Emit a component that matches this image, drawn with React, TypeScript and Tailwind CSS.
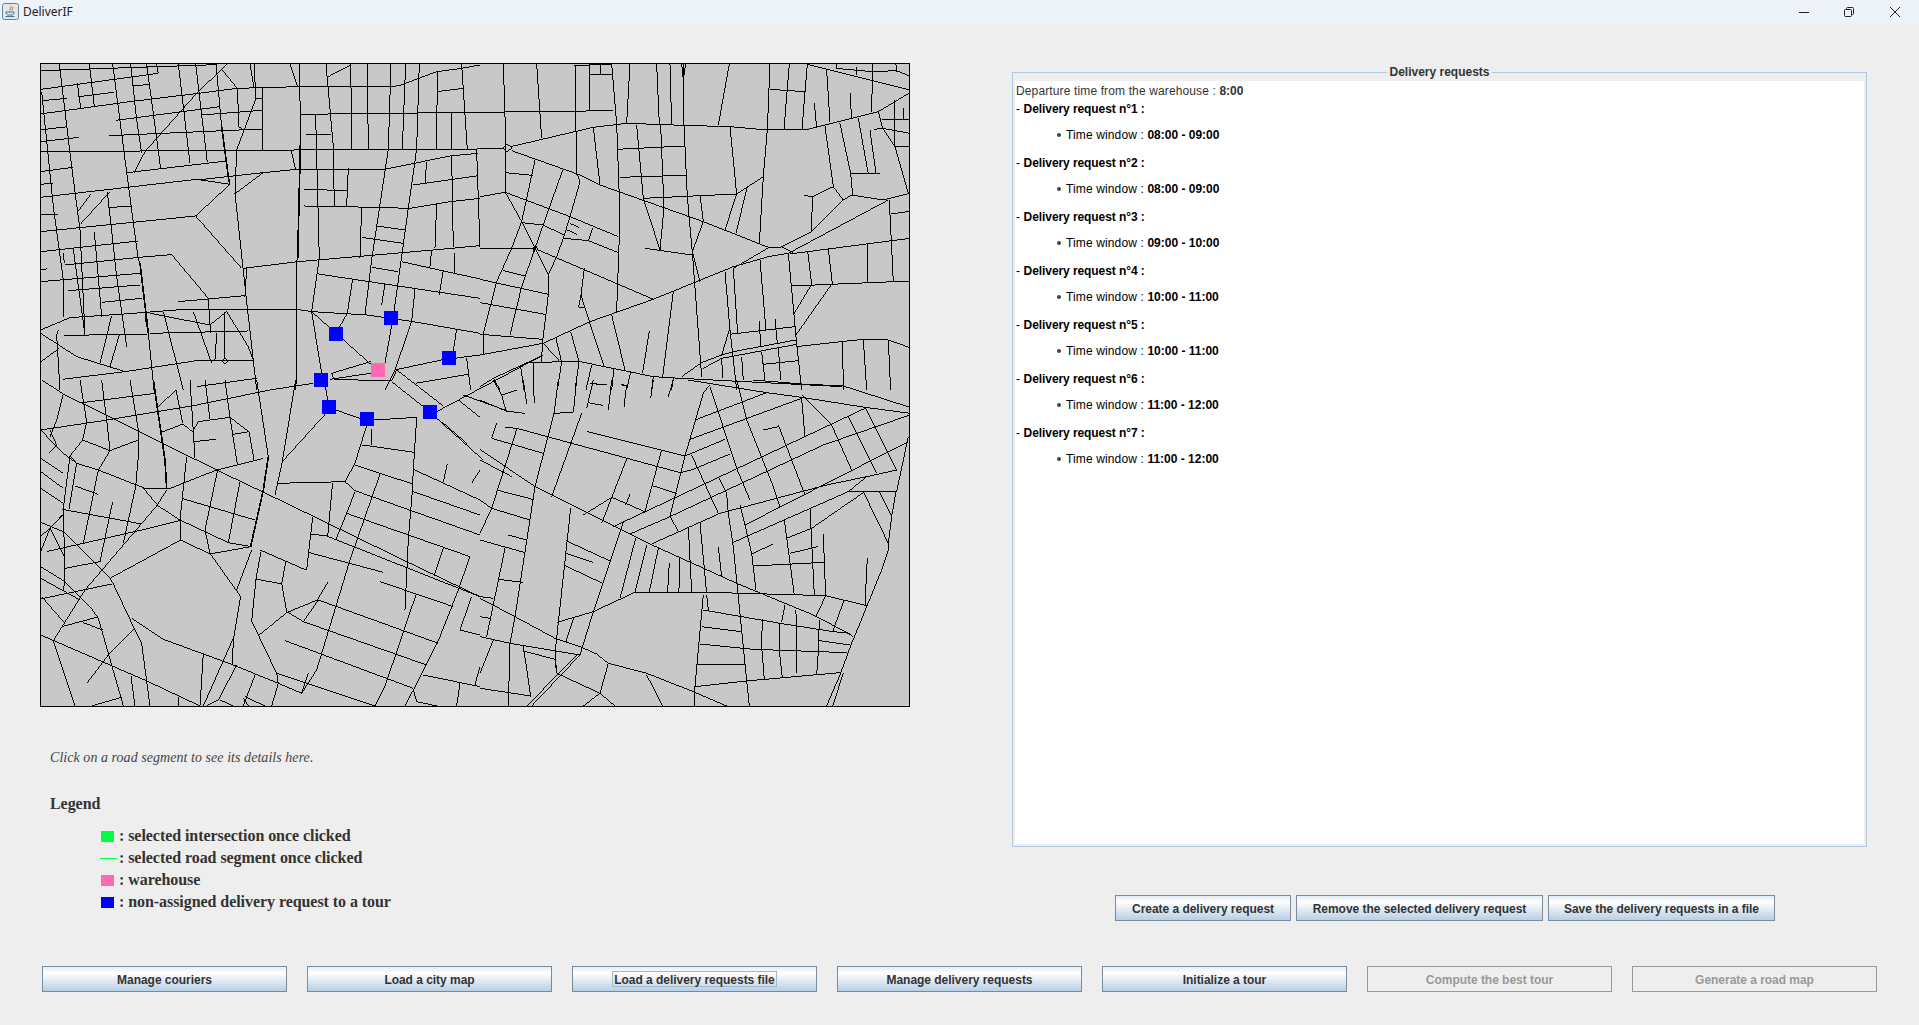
import React from 'react';

// road network traced per map quadrant, coordinates are 3x map pixels
const TILES: { dx: number; dy: number; roads: string[]; thick?: string[] }[] = [
  {
    dx: -10,
    dy: -13,
    thick: ['575,230 597,395', '812,250 803,630', '330,640 355,850'],
    roads: [
      '558,42 575,230', '597,395 600,403', '808,42 812,250', '355,850 372,1020', '325,630 330,640',
      '31,62 558,44', '33,118 385,70', '38,152 110,145', '145,140 252,127', '310,108 357,103',
      '31,192 300,155 505,130 622,115 805,110 1105,108 1220,65 1295,55 1350,45',
      '31,240 112,230', '31,275 147,262', '258,211 570,170', '237,257 697,237', '515,195 695,181',
      '31,305 800,300 1350,297', '31,365 128,352', '31,403 68,400',
      '31,442 500,388 600,403', '500,390 700,368 800,358 1065,358 1260,318 1345,310',
      '292,368 590,333', '312,368 345,305 500,130 575,58 592,40', '575,58 622,115',
      '622,115 627,230 640,240', '678,145 620,300 615,430 650,755 680,1020', '678,115 678,145 695,145',
      '698,115 698,300', '783,300 797,358', '614,432 700,368', '600,403 497,498 635,655',
      '31,545 497,498', '145,483 183,432', '152,522 240,425', '232,425 260,680 290,890',
      '235,473 305,468', '31,495 85,492', '32,605 325,573', '105,645 328,622 425,614', '33,660 50,657',
      '115,722 330,705', '32,695 330,670', '215,757 335,745',
      '32,840 120,803 270,793 440,780 800,778 845,785 1010,795 1150,815 1350,850',
      '360,790 540,825 590,785', '102,856 350,853', '360,850 655,843', '425,614 535,745 540,825 543,850',
      '445,755 645,737', '590,785 655,890 670,930', '585,785 585,925', '575,933 585,925 595,933 585,941 575,933',
      '32,850 140,920 285,965 500,932 672,932', '98,988 285,965', '33,935 88,895', '85,840 80,855 90,1020',
      '500,1010 680,985', '88,42 125,350 150,540 165,855', '35,125 70,470 100,690 100,800',
      '248,42 290,367 325,630', '345,800 355,850', '178,42 193,170', '142,100 152,175', '302,42 320,210 335,310',
      '350,42 392,355', '380,42 385,70', '445,42 480,340', '497,42 532,337', '660,42 672,115', '673,42 677,145',
      '780,42 803,110', '857,195 868,625 845,785', '888,42 910,290 913,470', '895,80 962,45', '962,42 966,297',
      '1012,42 1015,297', '1083,42 1075,297 1025,630 1005,795', '1127,42 1117,297',
      '1168,42 1160,297 1135,475 1090,800 1065,940', '1222,65 1220,297', '1295,42 1312,297', '1220,125 1300,115',
      '1265,187 1265,297', '810,193 1350,187', '828,253 903,253', '822,418 955,422',
      '822,468 940,470 1140,475 1260,455 1350,445', '955,355 950,470', '995,472 990,625', '1040,528 1125,540',
      '995,562 1120,580', '1150,405 1345,377', '1190,335 1185,400', '1265,315 1270,590', '1340,300 1350,590',
      '1220,460 1215,595', '640,655 805,635 1210,600 1350,587', '865,672 1350,745', '845,785 875,970',
      '845,785 918,850 1025,945', '968,688 952,790 918,850', '1065,700 1055,765', '1155,718 1145,815 1095,960 1065,1020',
      '1025,652 1105,665', '1115,635 1350,687', '1240,660 1228,735', '1205,600 1200,650', '1275,608 1275,672',
      '1280,838 1270,903', '1095,960 1235,930 1350,915', '1310,925 1322,1020', '1157,1000 1315,973',
      '905,970 1022,935', '905,970 912,988 1085,993 1100,960', '900,988 1022,970', '800,630 798,1020',
      '650,655 645,740', '245,797 210,940', '268,855 240,950', '193,545 215,800', '130,598 165,855',
      '400,785 460,1020', '490,785 545,940', '560,850 555,930', '100,610 103,640',
    ],
  },
  {
    dx: 440,
    dy: -13,
    roads: [
      '0,187 400,182', '70,42 78,295 75,430', '170,42 185,265', '285,45 290,375', '330,42 328,180', '285,47 395,42',
      '330,75 395,75', '362,42 362,75', '395,42 410,220 420,500 410,785', '450,42 440,220', '530,42 538,222',
      '570,42 575,225', '610,42 612,225 622,440 638,620 665,980', '605,42 610,90 617,42', '748,42 715,225',
      '870,42 862,240 850,380 838,580', '928,42 912,238', '982,42 966,238', '1040,60 1050,215', '985,44 1290,120',
      '1070,42 1068,55 1175,65 1250,62 1290,78', '1130,50 1130,75', '1178,42 1175,185', '1248,42 1250,65',
      '870,118 975,125', '1110,128 1115,205', '1003,158 1010,232',
      '92,290 340,232 440,220 610,226 750,230 862,240 985,238 1035,225 1195,185 1290,128',
      '340,232 360,405', '470,225 490,445 540,600', '542,225 552,475 540,600', '410,298 615,288', '420,382 618,376',
      '750,230 770,432 735,540', '802,410 768,550', '770,432 850,380', '490,445 770,432', '660,436 670,515',
      '70,295 0,295', '68,294 82,282 95,294 82,306 68,294', '95,302 300,375 360,405 670,515 865,592 900,592',
      '76,368 158,376', '165,330 125,515 95,595 50,695 10,850', '248,360 165,595 125,710 90,855',
      '0,440 76,427 125,515 205,675 205,735 187,880 185,935', '76,427 270,500 415,560', '415,608 325,572 252,565',
      '300,395 270,500 250,565 230,620 205,675', '292,372 300,395', '125,518 190,525 255,557', '0,595 158,595',
      '158,597 166,587 175,597 166,607 158,597', '175,600 520,748', '270,520 298,533', '262,540 290,553', '338,535 325,572',
      '495,595 635,615', '670,515 637,605 660,695', '70,662 135,678', '0,688 205,733', '0,758 195,793',
      '313,655 303,735 315,775 372,948', '303,735 296,772 313,772',
      '0,915 190,880 330,815 520,748 760,650 865,620 925,610', '0,1010 40,985 185,918', '0,853 187,868',
      '395,795 435,960', '580,725 548,980', '508,843 488,968', '735,665 750,840 770,1020', '760,655 773,850',
      '840,630 858,840', '925,610 950,880 965,1020', '930,612 1290,565', '983,602 995,703 940,795',
      '1045,597 1057,700 948,855', '935,708 1290,693', '1162,580 1162,695', '1228,450 1240,695', '1232,492 1290,484',
      '900,592 995,545 1090,450 1115,435 1210,450 1290,430', '925,610 1225,450', '905,590 940,608', '760,655 868,592',
      '1035,228 1060,410 1090,450', '1080,220 1112,370 1118,435', '1135,205 1165,372', '1170,240 1188,370',
      '1112,372 1200,370', '1183,238 1208,235 1290,250', '1195,185 1208,235 1245,290 1285,430', '1205,208 1290,210',
      '1270,175 1270,210', '1245,150 1245,290 1290,290', '972,436 997,440 1060,410', '997,440 995,545',
      '750,853 945,830', '725,915 760,905 948,870 950,890', '670,955 725,925 950,883', '605,980 665,938 725,915 748,840',
      '838,812 842,888', '885,807 892,880', '950,890 1085,875 1150,868 1225,870 1290,893', '1088,875 1090,1020',
      '1150,868 1160,1020', '1225,870 1232,1020', '120,950 150,937 300,935 520,980 600,985 1085,1010', '122,950 132,1020',
      '160,940 160,1020', '190,880 240,935', '228,865 245,937 232,1020', '272,845 297,935 285,1020', '335,945 318,1020',
      '402,955 395,1020', '452,965 440,1020', '520,980 515,1020', '580,983 575,1020', '785,920 790,990', '725,925 728,985',
      '850,943 955,932', '845,905 855,992', '895,890 902,990', '330,1000 380,1005', '425,1005 442,1008', '40,985 60,1020',
    ],
  },
  {
    dx: -10,
    dy: 317,
    thick: ['370,0 405,240 410,325', '715,230 700,330 662,500'],
    roads: [
      '157,68 375,40', '32,150 232,120 500,75 720,30 850,10', '100,42 560,270 770,370 1130,545 1350,650', '35,0 100,42',
      '150,0 170,125 158,180 120,228 100,385 105,600 100,630', '215,0 230,120 240,210', '300,0 325,150 325,230 317,320 280,490',
      '438,30 458,130', '480,0 490,155 495,235', '525,0 540,118', '585,0 600,112', '385,80 438,30',
      '395,157 458,132 488,155 505,125 600,112 657,155 672,240', '610,163 657,155', '600,112 622,252', '490,185 558,178',
      '680,0 715,230', '797,0 757,245 735,345', '757,245 888,100', '885,10 893,60', '917,90 990,115', '1024,148 1024,195',
      '1010,137 975,250 945,305 740,310', '997,195 1153,217', '1160,115 1150,270 1147,335 1135,480 1125,690', '908,308 893,470',
      '945,305 975,332 1350,465', '975,255 1148,312', '1150,268 1350,360', '1150,335 1350,405', '1050,283 960,540 860,870 815,940',
      '975,335 950,400 918,478', '950,400 1320,530', '843,462 890,468 1350,650', '848,412 830,570', '1252,252 1240,307',
      '1350,270 1325,310', '838,518 1060,577', '1320,530 1285,630 1230,770 1150,930 1125,978', '1240,505 1212,588',
      '1150,930 1160,965 1220,978', '1180,885 1350,920', '1290,910 1280,978', '1350,860 1335,915', '1325,650 1290,750',
      '1290,750 1350,765', '1158,645 1115,770 1065,920 1035,978', '1050,605 1270,680', '770,695 820,725 1190,855',
      '865,660 1225,790', '765,782 1150,925', '740,880 1035,978', '862,660 770,698 688,765', '862,660 895,605', '865,660 820,725',
      '770,695 755,610 768,545', '678,597 755,612', '693,515 678,597 665,725 685,765 740,880 745,910 725,978', '745,910 815,940',
      '835,880 815,940', '690,510 828,570', '663,500 540,522 452,480 240,595', '452,480 450,420 470,230',
      '340,325 385,378 450,420 525,455 595,488 665,500', '413,328 560,270 700,235', '563,270 525,450 540,520 632,650',
      '630,305 595,488', '455,355 675,420', '413,325 345,325 205,270 140,250 100,220 32,150', '240,212 325,180',
      '240,212 205,270 160,490', '158,180 240,212', '120,228 140,250', '140,250 117,388', '32,235 100,280', '32,275 100,325',
      '32,325 100,370', '97,388 335,432', '135,318 205,343', '248,365 210,545 105,565', '60,150 80,195 55,220', '100,42 80,120 60,170',
      '410,330 380,378 165,630 70,782', '50,515 160,490 335,450 455,420', '32,515 60,445 105,535', '60,445 97,405', '32,470 100,405',
      '32,427 100,455 240,595 250,612 315,750 335,790 360,978', '32,560 105,605 180,680 205,715 235,820 280,978', '32,595 150,660',
      '32,657 245,612', '100,725 35,650', '95,740 200,712', '160,728 218,750', '70,782 135,978', '32,765 355,905 510,978',
      '313,745 235,825 172,908', '305,715 400,778 610,855 745,910', '520,820 510,978', '632,650 610,780 607,855', '665,510 620,630',
      '612,770 520,978', '620,855 565,960 530,978', '675,885 640,978', '303,888 315,978', '185,978 275,952', '445,950 445,978',
      '570,960 610,978', '645,950 705,978', '640,955 655,978',
    ],
  },
  {
    dx: 440,
    dy: 317,
    roads: [
      '625,0 860,38 965,52 1155,82 1290,100', '820,0 965,12 1090,18 1290,82', '670,38 690,15', '0,60 78,93 135,100', '40,0 65,45 78,93',
      '65,45 110,30', '130,0 140,72', '160,0 163,70', '235,0 222,100 165,320 105,710 90,790', '290,0 280,97 222,100',
      '0,208 165,320 510,492 770,610 1000,705 1105,760 1120,770', '305,100 215,350', '75,142 110,145 600,278 640,268 750,222',
      '322,155 615,228 735,178', '545,210 495,395', '440,237 365,430', '520,318 590,340', '395,352 495,395', '310,405 395,352',
      '450,343 437,375', '670,40 615,228 570,408 595,455', '690,20 770,265 810,360', '645,120 860,38', '630,178 965,55', '965,55 975,170',
      '965,45 1055,135 1115,270', '1155,82 1250,270', '1105,110 1190,280', '400,440 720,290 1155,85', '450,462 570,410 1030,195 1290,105',
      '515,492 720,400 1040,315 1160,290 1250,270', '795,435 1030,315 1285,185', '760,487 1105,335 1160,290', '850,150 895,140',
      '895,135 975,345', '770,0 800,120 880,320 900,380', '715,290 740,340 745,400 760,500 800,900 808,978', '780,375 795,435 815,520 828,630',
      '635,225 715,400', '625,440 635,635', '660,428 680,640', '715,500 725,590', '598,530 597,635', '568,548 563,635', '535,505 508,635',
      '500,495 465,635', '467,475 420,655', '430,425 340,695 300,825', '272,385 225,820 230,880', '258,482 390,543', '258,520 338,547',
      '255,557 368,610', '1105,335 1248,335 1235,410 1225,490 1225,510 1205,570 1140,730 1115,790 1080,885 1040,978', '1150,335 1225,490',
      '1198,335 1235,410', '1285,170 1250,335', '1150,338 995,445 920,475', '990,385 998,545 1003,645', '913,420 943,645', '930,520 1013,500',
      '815,522 880,492', '1030,462 1037,647 1008,710', '820,558 1033,547', '465,637 680,637 1037,647 1160,677', '1162,535 1155,677',
      '1092,662 1058,755', '915,675 905,725', '948,690 950,880', '847,718 845,800 853,898', '900,730 898,810 907,895', '1018,720 1015,815 1010,885',
      '670,690 900,730 1060,755 1110,760', '665,740 783,755', '660,792 820,808 1100,818', '1018,782 1110,795', '652,853 797,853',
      '670,645 645,920 643,978', '465,637 340,695 232,727', '282,710 258,785', '680,645 685,690', '645,920 800,903 1080,878',
      '385,850 500,880 640,935 740,978', '0,650 40,655', '0,655 105,710 225,775 300,800 350,822 385,850 360,940 310,978', '0,710 30,715',
      '75,505 20,770', '0,770 90,790 300,825', '90,790 85,978', '130,798 152,950', '130,813 225,838', '0,925 152,948', '40,780 0,880',
      '300,825 155,978', '292,825 140,978', '225,838 230,880 360,940 405,978', '500,885 548,978', '1090,880 1058,978', '0,480 135,518',
      '55,598 128,607', '85,465 140,480', '50,330 158,358', '35,385 150,420', '0,360 35,385', '50,130 35,175 190,220', '110,148 35,385 0,460',
      '0,240 95,290', '330,10 378,15', '323,68 368,76', '340,0 320,85', '395,0 385,90', '440,15 432,80', '520,0 512,55', '422,12 440,18', '580,0 565,50',
    ],
  },
  // around the warehouse, traced from a closer crop
  {
    dx: 210,
    dy: 217,
    roads: [
      '425,305 520,380', '438,268 580,378', '560,395 880,225', '560,415 700,540', '575,425 650,490', '372,420 500,412',
      '700,160 700,222', '640,345 770,392', '625,360 690,412',
    ],
  },
];

// top-left corners of the markers, in page pixels
const REQUESTS = [[384, 311], [329, 327], [442, 351], [314, 373], [322, 400], [360, 412], [423, 405]];

const SLOTS = ['08:00 - 09:00', '08:00 - 09:00', '09:00 - 10:00', '10:00 - 11:00', '10:00 - 11:00', '11:00 - 12:00', '11:00 - 12:00'];

const CityMap = () => (
  <div className="w-[870px] h-[644px] border border-black bg-[#c8c8c8] overflow-hidden">
    <svg width="868" height="642" viewBox="1 1 868 642" className="block" shapeRendering="crispEdges">
      {TILES.map((tile, i) => (
        <g key={i} transform={`translate(${tile.dx} ${tile.dy}) scale(0.3333)`} fill="none" stroke="#000">
          {tile.roads.map((points, j) => <polyline key={j} points={points} strokeWidth={3} />)}
          {tile.thick?.map((points, j) => <polyline key={j} points={points} strokeWidth={5} />)}
        </g>
      ))}
      <g transform="translate(-40 -63)">
        {REQUESTS.map(([x, y], i) => <rect key={i} x={x} y={y} width={14} height={14} fill="#0000ff" />)}
        <rect x={371} y={363} width={14} height={14} fill="#ff69b4" />
      </g>
    </svg>
  </div>
);

const Button = ({ label, width, disabled, focused }: { label: string; width: string; disabled?: boolean; focused?: boolean }) => (
  <div
    className={`${width} h-[26px] shrink-0 flex items-center justify-center border text-[12px] font-bold tracking-[-0.03px] font-['Liberation_Sans',sans-serif] ${
      disabled
        ? 'border-[#9a9a9a] bg-[#eeeeee] text-[#999999]'
        : 'border-[#7a8a99] bg-gradient-to-b from-[#e4edf5] via-white via-[25%] to-[#b8cfe5] text-[#333333]'
    }`}
  >
    <span className={`h-[16px] leading-[16px] ${focused ? 'px-[1px] border border-[#a3b8cc]' : 'pt-[1px]'}`}>{label}</span>
  </div>
);

const LegendRow = ({ color, children }: { color: string; children: string }) => (
  <div className="flex items-center h-[22px]">
    <span className={`ml-[51px] w-[13px] h-[11px] ${color}`} />
    <span className="ml-[5px]">{children}</span>
  </div>
);

const App = () => (
  <div className="w-[1919px] h-[1025px] overflow-hidden bg-[#eeeeee] flex flex-col">
    {/* title bar */}
    <div className="h-[23px] shrink-0 bg-[#eef3f9] flex items-center">
      <svg width="17" height="17" viewBox="0 0 17 17" className="ml-[2px]">
        <rect x="0.5" y="0.5" width="16" height="16" rx="2" fill="#dfe8f1" stroke="#6c8196" />
        <path d="M9 3c1 1.500-2 2.500-1 4.500M11 4c.5 1.500-1.500 2-1 3.500" fill="none" stroke="#e8772e" strokeWidth="1.200" />
        <path d="M4 9h8c0 2-1 3-2 3H6c-1 0-2-1-2-3zM3.500 13.500h9" fill="none" stroke="#4a6f96" strokeWidth="1" />
      </svg>
      <span className="ml-[4px] text-[12px] text-[#222222] font-['Noto_Sans',sans-serif]">DeliverIF</span>
      <div className="ml-auto flex items-center">
        <svg width="10" height="10" viewBox="0 0 10 10" className="mr-[35px]" stroke="#222" fill="none" shapeRendering="crispEdges"><path d="M0 5.500h10" /></svg>
        <svg width="10" height="10" viewBox="0 0 10 10" className="mr-[36px]" stroke="#222" fill="none"><rect x="0.500" y="2.500" width="7" height="7" rx="1" /><path d="M2.500 2.500V1.500a1 1 0 0 1 1-1h5a1 1 0 0 1 1 1v5a1 1 0 0 1-1 1h-1" /></svg>
        <svg width="10" height="10" viewBox="0 0 10 10" className="mr-[19px]" stroke="#222" fill="none"><path d="M0 0l10 10M10 0L0 10" /></svg>
      </div>
    </div>

    <div className="flex flex-1 min-h-0">
      {/* map and legend */}
      <div className="w-[1012px] shrink-0 pl-[40px] pt-[40px]">
        <CityMap />
        <p className="mt-[43px] ml-[10px] text-[14px] italic leading-[16px] tracking-[0.05px] text-[#444444] font-['Liberation_Serif',serif]">
          Click on a road segment to see its details here.
        </p>
        <div className="ml-[10px] text-[16px] font-bold tracking-[-0.06px] text-[#333333] font-['Liberation_Serif',serif]">
          <h2 className="mt-[29px] leading-[18px]">Legend</h2>
          <div className="mt-[12px]">
            <LegendRow color="bg-[#00ff40]">: selected intersection once clicked</LegendRow>
            <div className="flex items-center h-[22px]">
              <span className="ml-[50px] w-[17px] h-[1px] bg-[#00ff40]" />
              <span className="ml-[2px]">: selected road segment once clicked</span>
            </div>
            <LegendRow color="bg-[#ff69b4]">: warehouse</LegendRow>
            <LegendRow color="bg-[#0000ff]">: non-assigned delivery request to a tour</LegendRow>
          </div>
        </div>
      </div>

      {/* delivery requests */}
      <div className="w-[855px] shrink-0 pt-[42px] font-['Liberation_Sans',sans-serif]">
        <fieldset className="h-[782px] border border-[#b0c8e0] p-[2px]">
          <legend className="mx-auto px-[2px] text-[12px] leading-[14px] font-bold text-[#333333]">Delivery requests</legend>
          <div className="h-full bg-white pl-[1px] pt-[3px] text-[12px] leading-[14px] tracking-[0.13px] text-[#333333]">
            <p>Departure time from the warehouse : <b className="tracking-normal">8:00</b></p>
            {SLOTS.map((slot, i) => (
              <div key={i} className="h-[54px] pt-[4px] text-black">
                <p>- <b className="tracking-[-0.08px]">Delivery request n°{i + 1} :</b></p>
                <p className="mt-[12px] flex items-center">
                  <span className="ml-[41px] mr-[5px] w-[4px] h-[4px] rounded-full bg-[#444444]" />
                  <span>Time window : <b className="tracking-normal">{slot}</b></span>
                </p>
              </div>
            ))}
          </div>
        </fieldset>
        <div className="mt-[48px] pl-[103px] flex gap-[5px]">
          <Button label="Create a delivery request" width="w-[176px]" />
          <Button label="Remove the selected delivery request" width="w-[247px]" />
          <Button label="Save the delivery requests in a file" width="w-[227px]" />
        </div>
      </div>
    </div>

    {/* main actions */}
    <div className="shrink-0 pl-[42px] pb-[33px] flex gap-[20px]">
      <Button label="Manage couriers" width="w-[245px]" />
      <Button label="Load a city map" width="w-[245px]" />
      <Button label="Load a delivery requests file" width="w-[245px]" focused />
      <Button label="Manage delivery requests" width="w-[245px]" />
      <Button label="Initialize a tour" width="w-[245px]" />
      <Button label="Compute the best tour" width="w-[245px]" disabled />
      <Button label="Generate a road map" width="w-[245px]" disabled />
    </div>
  </div>
);

export default App;
